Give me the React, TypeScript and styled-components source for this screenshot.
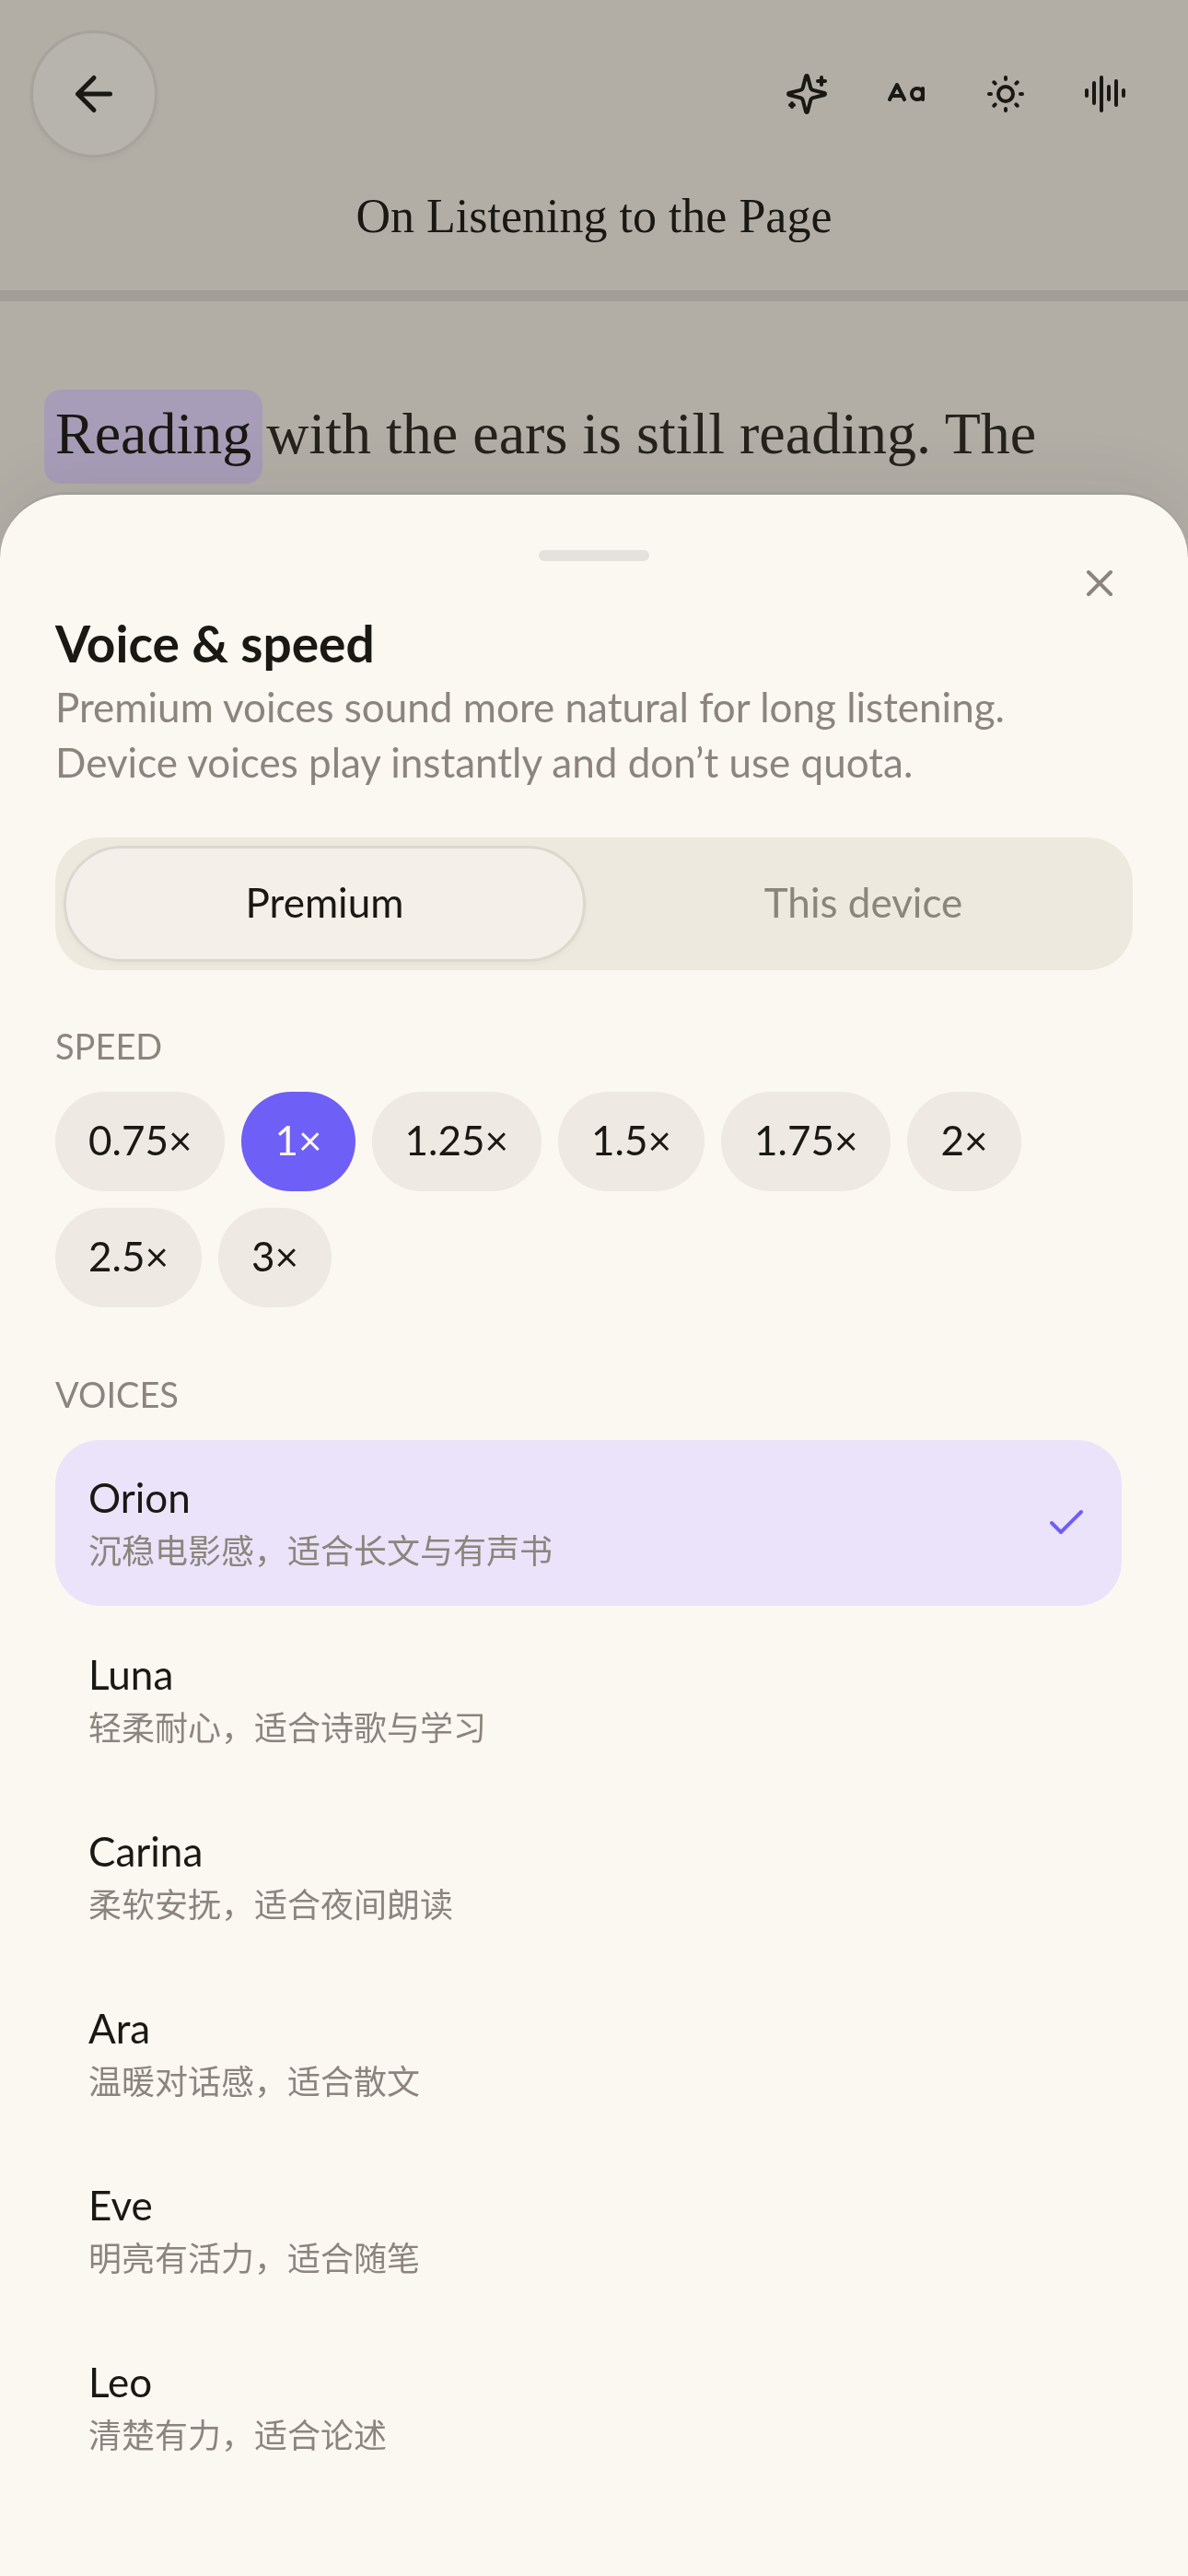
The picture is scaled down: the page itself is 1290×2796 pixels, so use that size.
import React, { useState } from "react";
import styled, { createGlobalStyle } from "styled-components";

const sans = `Lato, "Noto Sans CJK SC", sans-serif`;
const serif = `"Liberation Serif", "Noto Sans CJK SC", serif`;

const GlobalStyle = createGlobalStyle`
  *, *::before, *::after { box-sizing: border-box; }
  body {
    margin: 0;
    background: #b2aea6;
    color: #1a1813;
    font-family: ${sans};
  }
  button { font: inherit; color: inherit; border: 0; padding: 0; background: none; cursor: pointer; }
  h1, h2, h3, p, ul { margin: 0; padding: 0; font-weight: 400; }
`;

const Page = styled.div`
  min-height: 100vh;
  overflow: hidden;
`;

const Header = styled.header`
  border-bottom: 12px solid #a39d97;
`;

const Toolbar = styled.div`
  display: flex;
  align-items: center;
  justify-content: space-between;
  padding: 33px 36px 0 33px;
`;

const BackButton = styled.button`
  display: grid;
  place-items: center;
  width: 138px;
  height: 138px;
  border: 3px solid #a7a39c;
  border-radius: 50%;
  background: #b7b3ad;
  box-shadow: 0 3px 6px rgba(26, 24, 19, 0.03);
`;

const Tools = styled.div`
  display: flex;
`;

const ToolButton = styled.button`
  display: grid;
  place-items: center;
  width: 108px;
  height: 108px;
`;

const DocTitle = styled.h1`
  padding: 32px 36px 48px;
  font-family: ${serif};
  font-size: 52px;
  line-height: 64px;
  text-align: center;
`;

const Article = styled.main`
  padding: 96px 60px;
  font-family: ${serif};
  font-size: 64px;
  line-height: 96px;
  color: #26231d;
`;

const SpokenWord = styled.mark`
  display: inline-block;
  margin: 0 -12px;
  padding: 0 12px 6px;
  border-radius: 18px;
  background: #a79db8;
  color: #1a1813;
`;

const Backdrop = styled.div`
  position: fixed;
  inset: 0;
  display: flex;
  align-items: flex-end;
`;

const Sheet = styled.section`
  position: relative;
  display: flex;
  flex-direction: column;
  width: 100%;
  padding: 60px 60px 93px;
  border-top: 3px solid #a39f99;
  border-radius: 72px 72px 0 0;
  background: #fbf8f1;
  box-shadow: 0 -12px 72px rgba(26, 24, 40, 0.06);
`;

const Handle = styled.div`
  align-self: center;
  width: 120px;
  height: 12px;
  border-radius: 6px;
  background: #e5e2dd;
`;

const CloseButton = styled.button`
  position: absolute;
  top: 48px;
  right: 48px;
  display: grid;
  place-items: center;
  width: 96px;
  height: 96px;
  color: #8b857d;
`;

const SheetTitle = styled.h2`
  margin-top: 56px;
  font-size: 55px;
  line-height: 66px;
  font-weight: 700;
`;

const Description = styled.p`
  margin-top: 6px;
  font-size: 44px;
  line-height: 60px;
  color: #8b857d;
`;

const Segments = styled.div`
  display: grid;
  grid-template-columns: 1fr 1fr;
  gap: 18px;
  margin-top: 52px;
  padding: 9px;
  border-radius: 48px;
  background: #ede9df;
`;

const Segment = styled.button<{ $active: boolean }>`
  height: 126px;
  padding-bottom: 4px;
  border: 3px solid ${(p) => (p.$active ? "#dcd8cd" : "transparent")};
  border-radius: 63px;
  background: ${(p) => (p.$active ? "#f4efe8" : "transparent")};
  box-shadow: ${(p) => (p.$active ? "0 3px 6px rgba(26, 24, 19, 0.03)" : "none")};
  color: ${(p) => (p.$active ? "#1a1813" : "#8a867a")};
  font-size: 44px;
`;

const SectionLabel = styled.h3`
  margin: 58px 0 26px;
  font-size: 38px;
  line-height: 48px;
  text-transform: uppercase;
  color: #8b857d;
`;

const Chips = styled.div`
  display: flex;
  flex-wrap: wrap;
  gap: 18px;
  padding-bottom: 12px;
`;

const Chip = styled.button<{ $active: boolean }>`
  height: 108px;
  padding: 0 36px 4px;
  border-radius: 54px;
  background: ${(p) => (p.$active ? "#6e5ff6" : "#eee9e2")};
  color: ${(p) => (p.$active ? "#fbf8f1" : "#1a1813")};
  font-size: 44px;
`;

const VoiceList = styled.ul`
  display: flex;
  flex-direction: column;
  gap: 12px;
  padding-right: 12px;
  list-style: none;
`;

const VoiceButton = styled.button<{ $active: boolean }>`
  display: flex;
  align-items: center;
  justify-content: space-between;
  width: 100%;
  height: 180px;
  padding: 0 36px;
  border-radius: 48px;
  background: ${(p) => (p.$active ? "#ebe3fa" : "transparent")};
  text-align: left;
`;

const VoiceName = styled.span`
  display: block;
  font-size: 44px;
  line-height: 60px;
`;

const VoiceNote = styled.span`
  display: block;
  font-size: 36px;
  line-height: 56px;
  color: #8b857d;
`;

const CheckMark = styled.span`
  display: grid;
  color: #6e5ff6;
`;

const Icon = ({ size, d, children }: { size: number; d: string; children?: React.ReactNode }) => (
  <svg
    width={size}
    height={size}
    viewBox="0 0 24 24"
    fill="none"
    stroke="currentColor"
    strokeWidth={2}
    strokeLinecap="round"
    strokeLinejoin="round"
    aria-hidden="true"
  >
    <path d={d} />
    {children}
  </svg>
);

const sparkles =
  "M9.937 15.5A2 2 0 0 0 8.5 14.063l-6.135-1.582a.5.5 0 0 1 0-.962L8.5 9.936A2 2 0 0 0 9.937 8.5l1.582-6.135a.5.5 0 0 1 .963 0L14.063 8.5A2 2 0 0 0 15.5 9.937l6.135 1.581a.5.5 0 0 1 0 .964L15.5 14.063a2 2 0 0 0-1.437 1.437l-1.582 6.135a.5.5 0 0 1-.963 0zM20 3v4M22 5h-4M4 17v2M5 18H3";
const letterCase = "m3 15 4-8 4 8M4 13h6M21 9v6";
const sun =
  "M12 3v1M12 20v1M3 12h1M20 12h1m-2.636-6.364-.707.707M6.343 17.657l-.707.707M5.636 5.636l.707.707M17.657 17.657l.707.707";
const audio = "M2 10v3M6 6v11M10 3v18M14 8v7M18 5v13M22 10v3";

const speeds = ["0.75", "1", "1.25", "1.5", "1.75", "2", "2.5", "3"];
const sources = ["Premium", "This device"];
const voices = [
  { name: "Orion", note: "沉稳电影感，适合长文与有声书" },
  { name: "Luna", note: "轻柔耐心，适合诗歌与学习" },
  { name: "Carina", note: "柔软安抚，适合夜间朗读" },
  { name: "Ara", note: "温暖对话感，适合散文" },
  { name: "Eve", note: "明亮有活力，适合随笔" },
  { name: "Leo", note: "清楚有力，适合论述" },
];

export default function App() {
  const [source, setSource] = useState("Premium");
  const [speed, setSpeed] = useState("1");
  const [voice, setVoice] = useState("Orion");

  return (
    <>
      <GlobalStyle />
      <Page>
        <Header>
          <Toolbar>
            <BackButton aria-label="Back">
              <Icon size={60} d="m12 19-7-7 7-7M19 12H5" />
            </BackButton>
            <Tools>
              <ToolButton aria-label="Assistant">
                <Icon size={48} d={sparkles} />
              </ToolButton>
              <ToolButton aria-label="Text size">
                <Icon size={48} d={letterCase}>
                  <circle cx="18" cy="12" r="3" />
                </Icon>
              </ToolButton>
              <ToolButton aria-label="Theme">
                <Icon size={48} d={sun}>
                  <circle cx="12" cy="12" r="4" />
                </Icon>
              </ToolButton>
              <ToolButton aria-label="Voice">
                <Icon size={48} d={audio} />
              </ToolButton>
            </Tools>
          </Toolbar>
          <DocTitle>On Listening to the Page</DocTitle>
        </Header>
        <Article>
          <p>
            <SpokenWord>Reading</SpokenWord> with the ears is still reading. The
          </p>
        </Article>
      </Page>
      <Backdrop>
        <Sheet role="dialog" aria-labelledby="sheet-title">
          <Handle />
          <CloseButton aria-label="Close">
            <Icon size={48} d="M18 6 6 18M6 6l12 12" />
          </CloseButton>
          <SheetTitle id="sheet-title">Voice &amp; speed</SheetTitle>
          <Description>
            Premium voices sound more natural for long listening.
            <br />
            Device voices play instantly and don’t use quota.
          </Description>
          <Segments>
            {sources.map((s) => (
              <Segment key={s} $active={s === source} aria-pressed={s === source} onClick={() => setSource(s)}>
                {s}
              </Segment>
            ))}
          </Segments>
          <SectionLabel>Speed</SectionLabel>
          <Chips>
            {speeds.map((s) => (
              <Chip key={s} $active={s === speed} aria-pressed={s === speed} onClick={() => setSpeed(s)}>
                {s}×
              </Chip>
            ))}
          </Chips>
          <SectionLabel>Voices</SectionLabel>
          <VoiceList>
            {voices.map((v) => (
              <li key={v.name}>
                <VoiceButton $active={v.name === voice} aria-pressed={v.name === voice} onClick={() => setVoice(v.name)}>
                  <span>
                    <VoiceName>{v.name}</VoiceName>
                    <VoiceNote lang="zh-CN">{v.note}</VoiceNote>
                  </span>
                  {v.name === voice && (
                    <CheckMark>
                      <Icon size={48} d="M20 6 9 17l-5-5" />
                    </CheckMark>
                  )}
                </VoiceButton>
              </li>
            ))}
          </VoiceList>
        </Sheet>
      </Backdrop>
    </>
  );
}
